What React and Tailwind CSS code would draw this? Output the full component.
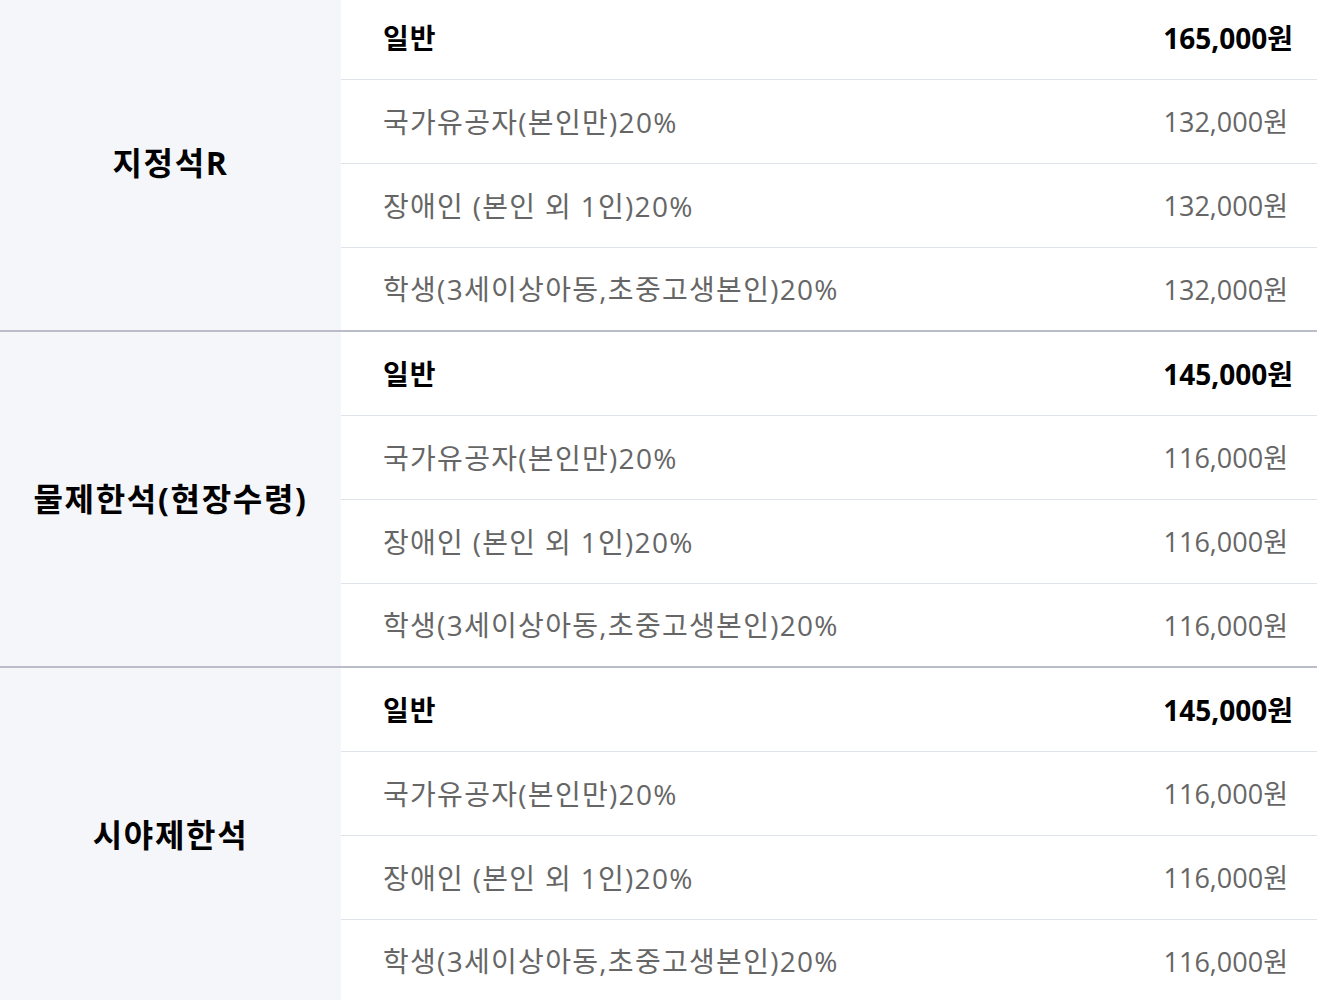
const groups = [
  {
    name: "지정석R",
    base: "165,000원",
    price: "132,000원",
  },
  {
    name: "물제한석(현장수령)",
    base: "145,000원",
    price: "116,000원",
  },
  {
    name: "시야제한석",
    base: "145,000원",
    price: "116,000원",
  },
];

const discounts = [
  "국가유공자(본인만)20%",
  "장애인 (본인 외 1인)20%",
  "학생(3세이상아동,초중고생본인)20%",
];

function Row({ label, price, bold, last }) {
  return (
    <div
      className={
        "flex items-center justify-between pl-[42px] " +
        (last ? "h-[82px] " : "h-[84px] border-b border-[#dfe3ea] ") +
        (bold ? "pr-[24px] text-black font-bold" : "pr-[29px] text-[#666666]")
      }
    >
      <span className={bold ? "text-[28px] tracking-[1px]" : "text-[28px] tracking-[1.3px]"}>{label}</span>
      <span className={bold ? "text-[28px]" : "text-[27px]"}>{price}</span>
    </div>
  );
}

export default function App() {
  return (
    <div
      className="w-[1317px] -mt-[4px] bg-white leading-none"
      style={{ fontFamily: '"Open Sans", "Noto Sans CJK KR", sans-serif' }}
    >
      {groups.map(g => (
        <div key={g.name} className="flex border-b-2 border-[#b9bdc7]">
          <div className="w-[341px] shrink-0 bg-[#f4f6fa] flex items-center justify-center">
            <span className="text-[32px] font-bold text-black tracking-[1.7px]">{g.name}</span>
          </div>
          <div className="flex-1">
            <Row label="일반" price={g.base} bold />
            {discounts.map((d, i) => (
              <Row key={d} label={d} price={g.price} last={i === discounts.length - 1} />
            ))}
          </div>
        </div>
      ))}
    </div>
  );
}
